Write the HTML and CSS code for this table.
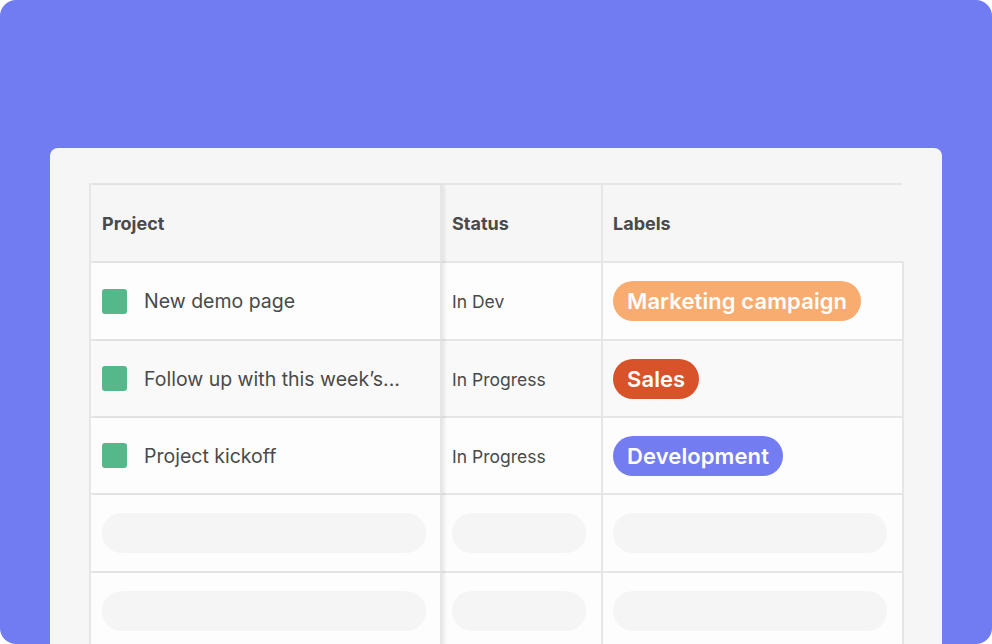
FILE: index.html
```html
<!DOCTYPE html>
<html lang="en">
<head>
<meta charset="utf-8">
<title>Projects table</title>
<link rel="stylesheet" href="styles.css">
</head>
<body>
<div class="frame">
  <div class="card">
    <div class="table">
      <div class="cell head first">Project</div>
      <div class="cell head">Status</div>
      <div class="cell head last">Labels</div>

      <div class="cell first"><span class="sq"></span><span class="name">New demo page</span></div>
      <div class="cell status">In Dev</div>
      <div class="cell last"><span class="pill orange">Marketing campaign</span></div>

      <div class="cell first hover"><span class="sq"></span><span class="name">Follow up with this week’s...</span></div>
      <div class="cell status hover">In Progress</div>
      <div class="cell last hover"><span class="pill red">Sales</span></div>

      <div class="cell first"><span class="sq"></span><span class="name">Project kickoff</span></div>
      <div class="cell status">In Progress</div>
      <div class="cell last"><span class="pill purple">Development</span></div>

      <div class="cell first"><span class="skel"></span></div>
      <div class="cell"><span class="skel"></span></div>
      <div class="cell last"><span class="skel"></span></div>

      <div class="cell first"><span class="skel"></span></div>
      <div class="cell"><span class="skel"></span></div>
      <div class="cell last"><span class="skel"></span></div>
    </div>
  </div>
</div>
</body>
</html>
```

FILE: styles.css
```css
* { box-sizing: border-box; }
html, body {
  margin: 0;
  padding: 0;
  background: #ffffff;
}
body {
  font-family: "Inter", "Noto Sans", sans-serif;
  color: #444;
}
.frame {
  width: 992px;
  height: 644px;
  background: #727cf2;
  border-radius: 16px;
  padding: 148px 50px 0 50px;
  overflow: hidden;
}
.card {
  background: #f6f6f6;
  border-radius: 8px 8px 0 0;
  height: 496px;
  padding: 35px 40px 0 39px;
}
.table {
  display: grid;
  grid-template-columns: 351px 161px 301px;
  grid-template-rows: 78px 78px 77px 77px 78px 78px;
  border-top: 2px solid #e6e6e6;
  border-left: 2px solid #e6e6e6;
}
.cell {
  display: flex;
  align-items: center;
  background: #fdfdfd;
  border-bottom: 2px solid #e6e6e6;
  border-right: 2px solid #e6e6e6;
  padding: 0 15px 0 10px;
  font-size: 19.5px;
  color: #4a4a4a;
  white-space: nowrap;
  position: relative;
}
.cell.head {
  background: #f6f6f6;
  font-weight: 700;
  font-size: 18px;
  color: #4a4a4a;
}
.cell.head.last { border-right: none; }
.cell.status {
  font-size: 17.5px;
  padding-top: 1px;
}
.cell.first {
  box-shadow: 3px 0 3px rgba(0, 0, 0, 0.07);
  z-index: 1;
  padding-left: 11px;
  padding-right: 14px;
}
.cell.hover { background: #f9f9f9; }
.sq {
  width: 25px;
  height: 25px;
  border-radius: 3px;
  background: #55b88b;
  flex: none;
  margin-right: 17px;
}
.pill {
  display: inline-flex;
  align-items: center;
  height: 40px;
  padding: 0 14px;
  border-radius: 20px;
  color: #fff;
  font-weight: 600;
  font-size: 22px;
  letter-spacing: 0.1px;
}
.orange { background: #f8ac70; }
.red { background: #d8532a; }
.purple { background: #737cf0; }
.skel {
  display: block;
  height: 40px;
  width: 100%;
  border-radius: 20px;
  background: #f5f5f5;
}
```
